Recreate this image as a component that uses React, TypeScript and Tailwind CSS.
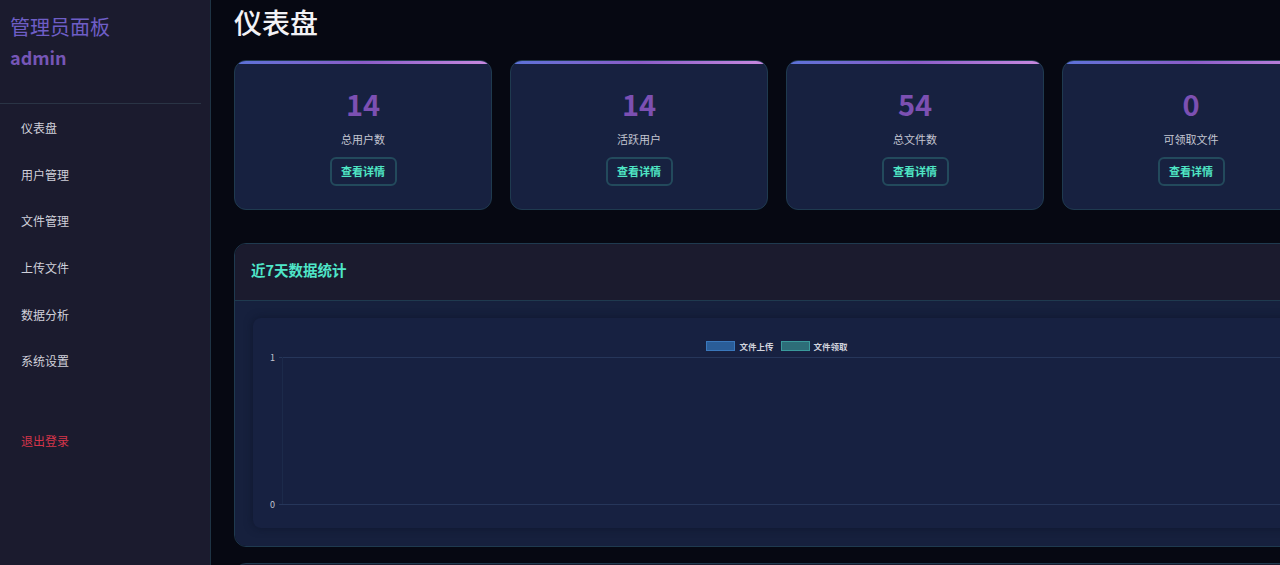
import React from 'react';

const font = { fontFamily: '"Noto Sans CJK SC", "Noto Sans", sans-serif' };

const navItems = ['仪表盘', '用户管理', '文件管理', '上传文件', '数据分析', '系统设置'];

const stats = [
  { value: '14', label: '总用户数' },
  { value: '14', label: '活跃用户' },
  { value: '54', label: '总文件数' },
  { value: '0', label: '可领取文件' },
];

const StatCard: React.FC<{ value: string; label: string }> = ({ value, label }) => (
  <div className="relative h-[150px] rounded-xl border border-[#1f3a4f] bg-[#172140] overflow-hidden flex flex-col items-center">
    <div className="absolute left-0 right-0 top-0 h-[3px] bg-gradient-to-r from-[#5a72d8] via-[#8a5cc8] to-[#c98ae0]" />
    <div className="mt-[24px] text-[29px] leading-[36px] font-bold text-[#7c50b2]">{value}</div>
    <div className="mt-[11px] text-[11px] leading-[14px] text-[#c4c6d2]">{label}</div>
    <button className="mt-[11px] h-[29px] w-[67px] rounded-md border-2 border-[#234a5c] text-[11px] font-bold text-[#4fe6c4]">
      查看详情
    </button>
  </div>
);

export default function App() {
  return (
    <div className="flex h-[565px] w-[1280px] overflow-hidden bg-[#060812]" style={font}>
      <aside className="w-[211px] shrink-0 border-r border-[#1e3344] bg-[#1b1b2e] flex flex-col">
        <div className="px-[10px] pt-[13px]">
          <div className="text-[20px] leading-[28px] text-[#6e5ec6]">管理员面板</div>
          <div className="mt-[2px] text-[18px] leading-[28px] font-bold text-[#7656b6]">admin</div>
        </div>
        <div className="mt-[32px] mr-[9px] h-px bg-[#2a3445]" />
        <nav className="mt-[1px] flex flex-col">
          {navItems.map((item) => (
            <div key={item} className="h-[46.6px] flex items-center px-[21px] text-[12px] text-[#d0d0da]">
              {item}
            </div>
          ))}
          <div className="mt-[33px] h-[46px] flex items-center px-[21px] text-[12px] text-[#d4354a]">退出登录</div>
        </nav>
      </aside>

      <main className="flex-1 overflow-hidden">
        <div className="w-[1086px] ml-[23px] pt-[4px]">
          <h1 className="text-[28px] leading-[36px] font-medium text-[#f2f2f6]">仪表盘</h1>
          <div className="mt-[20px] grid grid-cols-4 gap-[18px]">
            {stats.map((s) => (
              <StatCard key={s.label} value={s.value} label={s.label} />
            ))}
          </div>

          <section className="mt-[33px] rounded-xl border border-[#1f3a4f] overflow-hidden">
            <div className="h-[57px] bg-[#1b1b2e] border-b border-[#1f3a4f] flex items-center px-[16px] pb-[5px]">
              <h2 className="text-[14.5px] font-bold text-[#4fe6c8]">近7天数据统计</h2>
            </div>
            <div className="bg-[#16203d] px-[18px] pt-[17px] pb-[18px]">
              <div className="relative h-[210px] rounded-lg bg-[#172141] shadow-[0_0_8px_rgba(10,16,36,0.6)]">
                <div className="absolute left-0 right-0 top-[22px] flex justify-center items-center text-[8.5px] font-bold text-[#d2d4de]">
                  <span className="inline-block h-[10px] w-[29px] border border-[#3a78bc] bg-[#2a5d98]" />
                  <span className="ml-[4px]">文件上传</span>
                  <span className="ml-[7px] inline-block h-[10px] w-[29px] border border-[#3a9a9c] bg-[#2d6d78]" />
                  <span className="ml-[4px]">文件领取</span>
                </div>
                <div className="absolute left-[17px] top-[33px] text-[9px] text-[#c0c4d0]">1</div>
                <div className="absolute left-[26px] right-0 top-[39px] h-px bg-[#26365a]" />
                <div className="absolute left-[17px] top-[180px] text-[9px] text-[#c0c4d0]">0</div>
                <div className="absolute left-[26px] right-0 top-[186px] h-px bg-[#26365a]" />
                <div className="absolute left-[29px] top-[39px] h-[147px] w-px bg-[#1c2a4a]" />
              </div>
            </div>
          </section>

          <section className="mt-[16px] h-[200px] rounded-xl border border-[#1f3a4f] bg-[#1b1b2e]" />
        </div>
      </main>
    </div>
  );
}
